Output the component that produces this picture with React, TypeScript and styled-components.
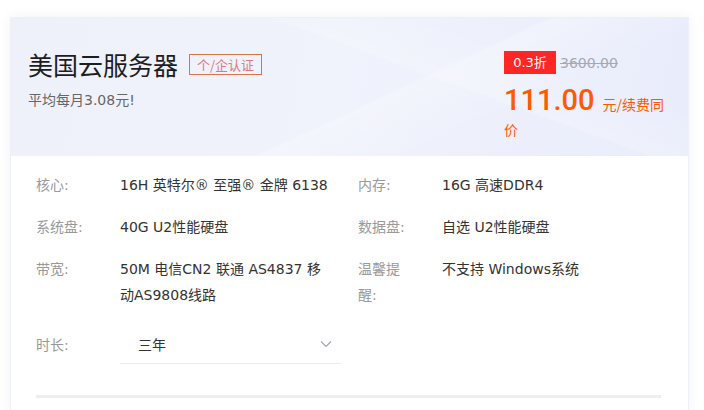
import React from 'react';
import styled, { createGlobalStyle } from 'styled-components';

const GlobalStyle = createGlobalStyle`
  html, body {
    margin: 0;
    padding: 0;
    background: #ffffff;
  }
  body {
    font-family: 'DejaVu Sans', 'Noto Sans CJK SC', sans-serif;
  }
`;

const Page = styled.div`
  padding: 17px 15px 0 10px;
`;

const Card = styled.div`
  width: 679px;
  background: #ffffff;
  border: 1px solid #eef0f7;
  box-sizing: border-box;
  box-shadow: 0 0 12px rgba(30, 50, 120, 0.06);
`;

const Header = styled.div`
  height: 138px;
  box-sizing: border-box;
  display: flex;
  justify-content: space-between;
  padding: 29px 24px 0 17px;
  background:
    linear-gradient(155deg, transparent 55%, rgba(255, 255, 255, 0.25) 56%, transparent 72%),
    linear-gradient(20deg, transparent 60%, rgba(255, 255, 255, 0.2) 61%, transparent 76%),
    linear-gradient(100deg, #eef1fa 0%, #f0f2fc 50%, #e9edfb 100%);
`;

const TitleBlock = styled.div`
  display: flex;
  flex-direction: column;
`;

const TitleRow = styled.div`
  display: flex;
  align-items: center;
  gap: 11px;
`;

const Title = styled.h1`
  margin: 0;
  font-family: 'Noto Sans CJK SC', sans-serif;
  font-size: 25px;
  font-weight: 400;
  line-height: 34px;
  color: #1d1d1f;
`;

const Tag = styled.span`
  display: inline-block;
  border: 1px solid #d97444;
  padding: 0 7px;
  height: 19px;
  line-height: 19px;
  font-family: 'Noto Sans CJK SC', sans-serif;
  font-size: 13px;
  color: #e0787e;
`;

const SubTitle = styled.p`
  margin: 8px 0 0;
  font-size: 14px;
  line-height: 22px;
  color: #666;
`;

const PriceBlock = styled.div`
  width: 160px;
  padding-top: 4px;
`;

const DiscountRow = styled.div`
  display: flex;
  align-items: center;
  gap: 4px;
`;

const Discount = styled.span`
  display: inline-block;
  width: 52px;
  height: 23px;
  line-height: 23px;
  text-align: center;
  background: #ff2626;
  color: #fff;
  font-size: 13px;
`;

const OldPrice = styled.span`
  font-size: 14px;
  color: #a5a9b2;
  text-decoration: line-through;
`;

const PriceLine = styled.div`
  margin-top: 14px;
  line-height: 24px;
  color: #ff5a00;
`;

const Price = styled.span`
  font-family: Roboto, 'Noto Sans CJK SC', sans-serif;
  font-size: 29px;
  font-weight: 500;
  margin-right: 8px;
`;

const Unit = styled.span`
  font-family: 'Noto Sans CJK SC', sans-serif;
  font-size: 14px;
`;

const Body = styled.div`
  padding: 16px 27px 12px 25px;
`;

const SpecGrid = styled.div`
  display: grid;
  grid-template-columns: 300px 300px;
  column-gap: 22px;
  row-gap: 16px;
`;

const Spec = styled.div`
  display: flex;
  font-size: 14px;
  line-height: 26px;
`;

const Label = styled.div`
  width: 48px;
  margin-right: 36px;
  flex-shrink: 0;
  color: #999;
`;

const Value = styled.div`
  width: 210px;
  color: #333;
`;

const DurationRow = styled.div`
  display: flex;
  align-items: center;
  margin-top: 16px;
  font-size: 14px;
`;

const Select = styled.div`
  width: 221px;
  height: 40px;
  box-sizing: border-box;
  display: flex;
  align-items: center;
  justify-content: space-between;
  padding: 0 8px 0 18px;
  border-bottom: 1px solid #e8eaf0;
  color: #333;
`;

const Divider = styled.div`
  height: 3px;
  background: #eceef3;
  margin-top: 31px;
`;

const specs: [string, string][] = [
  ['核心:', '16H 英特尔® 至强® 金牌 6138'],
  ['内存:', '16G 高速DDR4'],
  ['系统盘:', '40G U2性能硬盘'],
  ['数据盘:', '自选 U2性能硬盘'],
  ['带宽:', '50M 电信CN2 联通 AS4837 移动AS9808线路'],
  ['温馨提醒:', '不支持 Windows系统'],
];

export default function App() {
  return (
    <>
      <GlobalStyle />
      <Page>
        <Card>
          <Header>
            <TitleBlock>
              <TitleRow>
                <Title>美国云服务器</Title>
                <Tag>个/企认证</Tag>
              </TitleRow>
              <SubTitle>平均每月3.08元!</SubTitle>
            </TitleBlock>
            <PriceBlock>
              <DiscountRow>
                <Discount>0.3折</Discount>
                <OldPrice>3600.00</OldPrice>
              </DiscountRow>
              <PriceLine>
                <Price>111.00</Price>
                <Unit>元/续费同价</Unit>
              </PriceLine>
            </PriceBlock>
          </Header>
          <Body>
            <SpecGrid>
              {specs.map(([k, v]) => (
                <Spec key={k}>
                  <Label>{k}</Label>
                  <Value>{v}</Value>
                </Spec>
              ))}
            </SpecGrid>
            <DurationRow>
              <Label>时长:</Label>
              <Select>
                <span>三年</span>
                <svg width="14" height="14" viewBox="0 0 14 14" fill="none">
                  <path d="M2 4.5 L7 9.5 L12 4.5" stroke="#a0a4ad" strokeWidth="1.1" />
                </svg>
              </Select>
            </DurationRow>
            <Divider />
          </Body>
        </Card>
      </Page>
    </>
  );
}
